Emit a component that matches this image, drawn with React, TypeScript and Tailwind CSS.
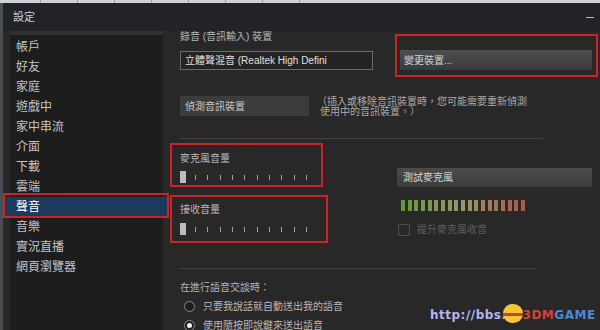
import React from 'react';

const menu = ['帳戶', '好友', '家庭', '遊戲中', '家中串流', '介面', '下載', '雲端', '聲音', '音樂', '實況直播', '網頁瀏覽器'];

// level meter: green -> tan -> red-brown
const meterColors = Array.from({ length: 19 }, (_, i) => {
  const t = i / 18;
  const from = [104, 150, 58];
  const mid = [150, 150, 110];
  const to = [170, 90, 70];
  const [a, b, k] = t < 0.5 ? [from, mid, t * 2] : [mid, to, (t - 0.5) * 2];
  const c = a.map((v, j) => Math.round(v + (b[j] - v) * k));
  return `rgb(${c[0]},${c[1]},${c[2]})`;
});

const Slider = () => (
  <div className="flex items-center h-[12px]">
    <div className="w-[6px] h-[12px] bg-[#bdbdbd]" />
    <div className="ml-[9px] w-[112px] flex justify-between items-center">
      {Array.from({ length: 10 }).map((_, i) => (
        <div key={i} className="w-[1px] h-[5px] bg-[#a0a0a0]" />
      ))}
    </div>
  </div>
);

const Radio = ({ checked, label }: { checked?: boolean; label: string }) => (
  <div className="h-[19px] flex items-center pl-[4px]">
    <div className="w-[11px] h-[11px] rounded-full border border-[#8a8a8a] bg-[#1e1e1e] flex items-center justify-center">
      {checked && <div className="w-[5px] h-[5px] rounded-full bg-[#f0f0f0]" />}
    </div>
    <span className="ml-[8px] text-[10px] text-[#b8b8b8]">{label}</span>
  </div>
);

export default function App() {
  return (
    <div className="relative w-[600px] h-[330px] overflow-hidden bg-[#282828] font-['Liberation_Sans','Noto_Sans_CJK_TC',sans-serif]">
      {/* desktop behind the window */}
      <div className="h-[3px] bg-[#cfd3d6] flex gap-[36px] pl-[40px]">
        {Array.from({ length: 8 }).map((_, i) => (
          <div key={i} className="w-[1px] h-[3px] bg-[#9aa0a6]" />
        ))}
      </div>

      <div className="flex h-[327px]">
        <div className="w-[3px] shrink-0 bg-[#4a4e54]" />
        <div className="flex-1 flex flex-col min-h-0">
          {/* title bar */}
          <div className="h-[28px] shrink-0 bg-[#222326] flex items-center justify-between pl-[10px] pr-[6px]">
            <span className="text-[11px] text-[#cfcfcf]">設定</span>
            <span className="w-[8px] h-[1px] bg-[#bdbdbd]" />
          </div>

          <div className="flex flex-1 min-h-0 overflow-hidden">
            {/* sidebar */}
            <div className="ml-[7px] w-[153px] shrink-0 bg-[#1d1d1d]">
              <div className="h-[4px] bg-[#303030]" />
              <div className="pt-[2px]">
                {menu.map((m) =>
                  m === '聲音' ? (
                    <div key={m} className="h-[20px] leading-[20px] -ml-[5px] -mr-[4px] pl-[11px] bg-[#1c3a5b] text-[12px] text-white">
                      {m}
                    </div>
                  ) : (
                    <div key={m} className="h-[20px] leading-[20px] pl-[6px] text-[12px] text-[#c4c4c4]">
                      {m}
                    </div>
                  )
                )}
              </div>
            </div>

            {/* content */}
            <div className="flex-1 pl-[17px]">
              {/* recording device */}
              <div className="flex">
                <div className="w-[220px]">
                  <div className="h-[12px] leading-[12px] text-[10px] text-[#b4b4b4]">錄音 (音訊輸入) 裝置</div>
                  <div className="mt-[8px] w-[193px] h-[19px] border border-[#6a6a6a] bg-[#232323] flex items-center pl-[4px] text-[10px] text-[#e0e0e0] whitespace-nowrap overflow-hidden">
                    立體聲混音 (Realtek High Defini
                  </div>
                </div>
                <button className="mt-[19px] w-[192px] h-[20px] bg-gradient-to-b from-[#4e4e4e] to-[#3a3a3a] text-left pl-[4px] text-[10px] text-[#d4d4d4]">
                  變更裝置...
                </button>
              </div>

              {/* detect devices */}
              <div className="mt-[26px] flex items-start">
                <button className="w-[129px] h-[20px] bg-[#3c3c3c] text-left pl-[5px] text-[10px] text-[#c8c8c8]">
                  偵測音訊裝置
                </button>
                <div className="ml-[8px] mt-[1px] text-[10px] leading-[10px] text-[#aaaaaa]">
                  <div>（插入或移除音訊裝置時，您可能需要重新偵測</div>
                  <div className="pl-[3px]">使用中的音訊裝置。）</div>
                </div>
              </div>

              <div className="mt-[21px] w-[363px] h-[1px] bg-[#424242]" />

              {/* volumes + mic test */}
              <div className="flex">
                <div className="w-[217px]">
                  <div className="mt-[14px] h-[12px] leading-[12px] text-[10px] text-[#b8b8b8]">麥克風音量</div>
                  <div className="mt-[6px]"><Slider /></div>
                  <div className="mt-[21px] h-[12px] leading-[12px] text-[10px] text-[#b8b8b8]">接收音量</div>
                  <div className="mt-[7px]"><Slider /></div>
                </div>
                <div className="flex flex-col">
                  <button className="mt-[29px] w-[195px] h-[19px] bg-gradient-to-b from-[#4c4c4c] to-[#3c3c3c] text-left pl-[6px] text-[10px] text-[#d4d4d4]">
                    測試麥克風
                  </button>
                  <div className="mt-[13px] ml-[4px] w-[124px] h-[11px] flex justify-between">
                    {meterColors.map((c, i) => (
                      <div key={i} className="w-[4px] h-[11px]" style={{ backgroundColor: c }} />
                    ))}
                  </div>
                  <div className="mt-[11px] ml-[1px] flex items-center">
                    <div className="w-[12px] h-[12px] border border-[#4c4c4c]" />
                    <span className="ml-[7px] text-[10px] text-[#5e5e5e]">提升麥克風收音</span>
                  </div>
                </div>
              </div>

              <div className="mt-[31px] w-[357px] h-[1px] bg-[#444444]" />

              {/* voice transmission */}
              <div className="mt-[13px] h-[12px] leading-[12px] text-[10px] text-[#b4b4b4]">在進行語音交談時：</div>
              <div className="mt-[3px]">
                <Radio label="只要我說話就自動送出我的語音" />
                <Radio checked label="使用隨按即說鍵來送出語音" />
              </div>
            </div>
          </div>
        </div>
      </div>

      {/* red annotation boxes */}
      <div className="absolute left-[3px] top-[193px] w-[166px] h-[25px] border-2 border-[#cc2229]" />
      <div className="absolute left-[395px] top-[34px] w-[203px] h-[43px] border-2 border-[#cc2229]" />
      <div className="absolute left-[170px] top-[143px] w-[153px] h-[44px] border-2 border-[#cc2229]" />
      <div className="absolute left-[170px] top-[195px] w-[158px] h-[48px] border-2 border-[#cc2229]" />

      {/* watermark */}
      <div className="absolute left-[430px] top-[304px] flex items-end font-['DejaVu_Sans',sans-serif] font-bold text-[12px] leading-[15px] tracking-[0.5px]">
        <span className="text-[#b4b6f0]">http://bbs.</span>
        <div className="relative w-[20px] h-[19px] -ml-[4px]">
          <div className="absolute inset-0 rounded-full bg-[#f2c53a]" />
          <div className="absolute left-0 right-0 top-[9px] h-[3px] bg-[#d0402a]" />
        </div>
        <span className="text-[#d8403a]">3DM</span>
        <span className="text-[#4a8ad8]">GAME</span>
      </div>
    </div>
  );
}
